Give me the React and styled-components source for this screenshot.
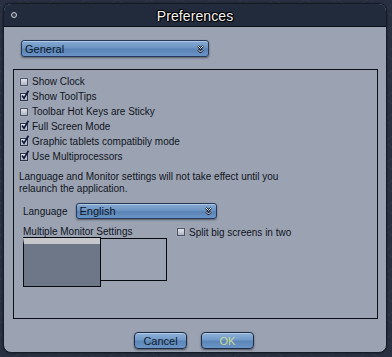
import React from "react";
import styled, { createGlobalStyle } from "styled-components";

const GlobalStyle = createGlobalStyle`
  html, body {
    margin: 0;
    padding: 0;
    background: #293041;
  }
  body {
    font-family: "Liberation Sans", Arial, sans-serif;
  }
`;

const Page = styled.div`
  width: 392px;
  height: 357px;
  padding: 3px;
  box-sizing: border-box;
  background-color: #283041;
  background-image: repeating-linear-gradient(
      35deg,
      rgba(255, 255, 255, 0.03) 0 1px,
      transparent 1px 18px
    ),
    repeating-linear-gradient(
      -35deg,
      rgba(255, 255, 255, 0.03) 0 1px,
      transparent 1px 18px
    );
`;

const Window = styled.div`
  width: 384px;
  height: 350px;
  box-sizing: border-box;
  border: 1px solid #141a26;
  border-radius: 8px;
  background: #9ba3b3;
  display: flex;
  flex-direction: column;
  overflow: hidden;
  box-shadow: 0 0 2px rgba(0, 0, 0, 0.6);
`;

const TitleBar = styled.div`
  position: relative;
  height: 22px;
  flex: 0 0 22px;
  background: #222b3c;
  border-bottom: 1px solid #0c101a;
  display: flex;
  align-items: center;
  justify-content: center;
`;

const CloseDot = styled.span`
  position: absolute;
  left: 7px;
  top: 8px;
  width: 4px;
  height: 4px;
  border-radius: 50%;
  border: 1.5px solid #c9ccd2;
  background: #3a4252;
`;

const Title = styled.div`
  color: #f4f4f4;
  font-size: 14px;
  letter-spacing: 0.1px;
  text-shadow: -1px 0 #000, 1px 0 #000, 0 -1px #000, 0 1px #000,
    1px 1px #000, -1px -1px #000;
  padding-top: 1px;
`;

const Body = styled.div`
  flex: 1;
  display: flex;
  flex-direction: column;
  padding: 13px 8px 0 9px;
`;

const Select = styled.div`
  box-sizing: border-box;
  width: ${(p) => p.$w}px;
  height: ${(p) => p.$h}px;
  margin-left: ${(p) => p.$ml || 0}px;
  border: 1px solid #253a5a;
  border-radius: 3px;
  background: linear-gradient(#86aad3 0%, #6d95c4 45%, #5a84b6 55%, #6a94c5 100%);
  box-shadow: 0 1px 2px rgba(0, 0, 0, 0.45), inset 0 1px 0 rgba(255, 255, 255, 0.35);
  display: flex;
  align-items: flex-end;
  justify-content: space-between;
  padding: 0 4px 0 3px;
  font-size: 11px;
  color: #0c1628;
  line-height: 13px;
`;

const Chevron = () => (
  <svg width="7" height="8" viewBox="0 0 7 8" style={{ marginBottom: 3 }}>
    <path d="M1 1 L3.5 3.5 L6 1 M1 4.5 L3.5 7 L6 4.5" fill="none" stroke="#0b1424" strokeWidth="2.2" />
    <path d="M1 1 L3.5 3.5 L6 1 M1 4.5 L3.5 7 L6 4.5" fill="none" stroke="#f2f4f8" strokeWidth="1" />
  </svg>
);

const TopSelectRow = styled.div`
  padding-left: 8px;
  margin-bottom: 12px;
`;

const Panel = styled.div`
  box-sizing: border-box;
  width: 365px;
  height: 250px;
  border: 1px solid #0c0f16;
  padding: 4px 0 0 6px;
  display: flex;
  flex-direction: column;
`;

const CheckRow = styled.label`
  display: flex;
  align-items: center;
  height: 15px;
  font-size: 10px;
  color: #10141c;
`;

const Box = styled.span`
  position: relative;
  flex: 0 0 auto;
  box-sizing: border-box;
  width: 8px;
  height: 8px;
  margin-right: 4px;
  border: 1px solid ${(p) => (p.$checked ? "#2c3346" : "#4c5364")};
  background: linear-gradient(#e3e6ec, #aeb5c2);
  box-shadow: 0 0 1px rgba(255, 255, 255, 0.5);
`;

const Check = styled.svg`
  position: absolute;
  left: 0px;
  top: -4px;
`;

const CheckBox = ({ checked }) => (
  <Box $checked={checked}>
    {checked && (
      <Check width="9" height="10" viewBox="0 0 9 10">
        <path d="M1 5.5 L3 8.3 L7.5 0.8" fill="none" stroke="#0e1a3c" strokeWidth="1.7" />
      </Check>
    )}
  </Box>
);

const Notice = styled.p`
  margin: 7px 0 0 -1px;
  font-size: 10px;
  line-height: 11.5px;
  color: #10141c;
  width: 285px;
`;

const LangRow = styled.div`
  display: flex;
  align-items: center;
  margin-top: 9px;
  padding-left: 3px;
  font-size: 10px;
  color: #10141c;
`;

const MonitorSection = styled.div`
  display: flex;
  margin-top: 7px;
  padding-left: 3px;
`;

const MonitorGroup = styled.div`
  width: 154px;
  display: flex;
  flex-direction: column;
`;

const Caption = styled.div`
  font-size: 10px;
  line-height: 12px;
  color: #10141c;
`;

const Screens = styled.div`
  display: flex;
  align-items: flex-start;
`;

const Screen = styled.div`
  box-sizing: border-box;
  width: ${(p) => p.$w}px;
  height: ${(p) => p.$h}px;
  border: 1px solid #07090d;
  margin-left: ${(p) => (p.$joined ? -1 : 0)}px;
  background: ${(p) => (p.$active ? "#6e7787" : "transparent")};
  border-top: ${(p) => (p.$active ? "6px solid #c6c8cc" : "1px solid #07090d")};
  box-shadow: ${(p) => (p.$active ? "0 -1px 0 #07090d" : "none")};
`;

const SplitRow = styled(CheckRow)`
  height: 12px;
  margin-top: 0px;
  align-self: flex-start;
`;

const Buttons = styled.div`
  display: flex;
  justify-content: center;
  gap: 14px;
  margin-top: 13px;
  padding-right: 3px;
`;

const Button = styled.button`
  box-sizing: border-box;
  width: 53px;
  height: 17px;
  padding: 0;
  border: 1px solid #1c2c46;
  border-radius: 4px;
  background: linear-gradient(#8fb1d8 0%, #719ac9 45%, #5c86b8 55%, #6b95c6 100%);
  box-shadow: 0 1px 2px rgba(0, 0, 0, 0.5), inset 0 1px 0 rgba(255, 255, 255, 0.35);
  font-family: "Liberation Sans", Arial, sans-serif;
  font-size: 11px;
  color: ${(p) => (p.$primary ? "#c9dc93" : "#111a2b")};
`;

const options = [
  { label: "Show Clock", checked: false },
  { label: "Show ToolTips", checked: true },
  { label: "Toolbar Hot Keys are Sticky", checked: false },
  { label: "Full Screen Mode", checked: true },
  { label: "Graphic tablets compatibily mode", checked: true },
  { label: "Use Multiprocessors", checked: true },
];

export default function App() {
  return (
    <>
      <GlobalStyle />
      <Page>
        <Window>
          <TitleBar>
            <CloseDot />
            <Title>Preferences</Title>
          </TitleBar>
          <Body>
            <TopSelectRow>
              <Select $w={188} $h={17}>
                <span>General</span>
                <Chevron />
              </Select>
            </TopSelectRow>
            <Panel>
              {options.map((o) => (
                <CheckRow key={o.label}>
                  <CheckBox checked={o.checked} />
                  {o.label}
                </CheckRow>
              ))}
              <Notice>
                Language and Monitor settings will not take effect until you
                relaunch the application.
              </Notice>
              <LangRow>
                <span>Language</span>
                <Select $w={141} $h={16} $ml={8}>
                  <span>English</span>
                  <Chevron />
                </Select>
              </LangRow>
              <MonitorSection>
                <MonitorGroup>
                  <Caption>Multiple Monitor Settings</Caption>
                  <Screens>
                    <Screen $w={78} $h={49} $active />
                    <Screen $w={67} $h={43} $joined />
                  </Screens>
                </MonitorGroup>
                <SplitRow>
                  <CheckBox checked={false} />
                  Split big screens in two
                </SplitRow>
              </MonitorSection>
            </Panel>
            <Buttons>
              <Button>Cancel</Button>
              <Button $primary>OK</Button>
            </Buttons>
          </Body>
        </Window>
      </Page>
    </>
  );
}
